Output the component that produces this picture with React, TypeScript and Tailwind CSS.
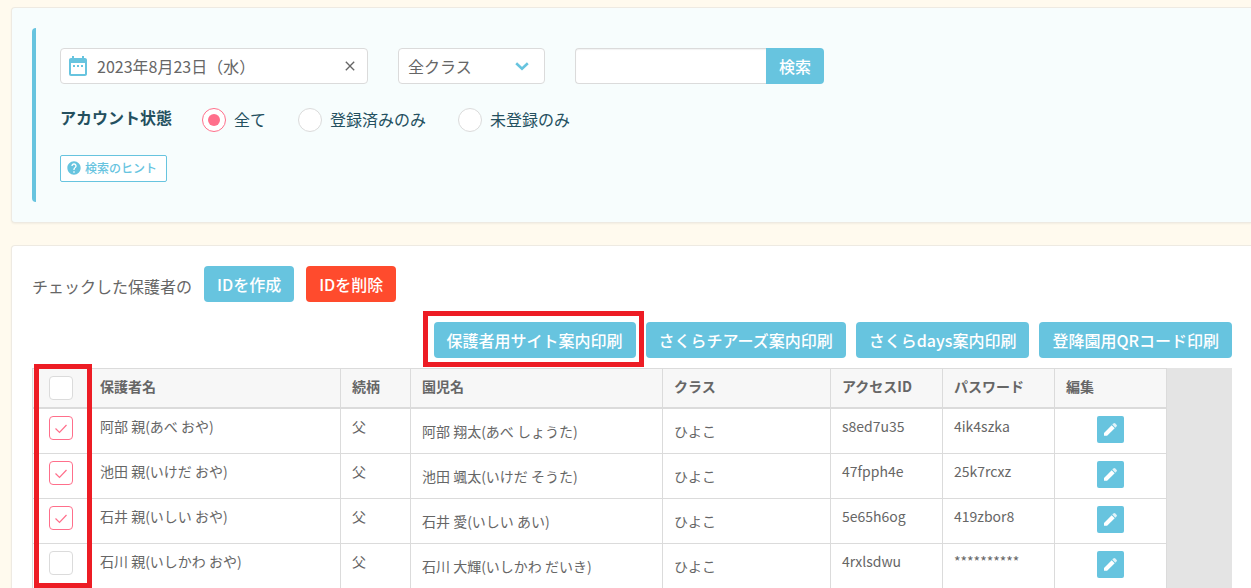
import { useState } from 'react'
import type { ReactNode } from 'react'
import { MdClose, MdDateRange, MdHelp } from 'react-icons/md'

interface Guardian {
  name: string
  relation: string
  child: string
  className: string
  accessId: string
  password: string
}

const GUARDIANS: Guardian[] = [
  { name: '阿部 親(あべ おや)', relation: '父', child: '阿部 翔太(あべ しょうた)', className: 'ひよこ', accessId: 's8ed7u35', password: '4ik4szka' },
  { name: '池田 親(いけだ おや)', relation: '父', child: '池田 颯太(いけだ そうた)', className: 'ひよこ', accessId: '47fpph4e', password: '25k7rcxz' },
  { name: '石井 親(いしい おや)', relation: '父', child: '石井 愛(いしい あい)', className: 'ひよこ', accessId: '5e65h6og', password: '419zbor8' },
  { name: '石川 親(いしかわ おや)', relation: '父', child: '石川 大輝(いしかわ だいき)', className: 'ひよこ', accessId: '4rxlsdwu', password: '**********' },
]

const COLUMNS = [
  { label: '保護者名', width: 'w-[252px]' },
  { label: '続柄', width: 'w-[70px]' },
  { label: '園児名', width: 'w-[252px]' },
  { label: 'クラス', width: 'w-[168px]' },
  { label: 'アクセスID', width: 'w-[112px]' },
  { label: 'パスワード', width: 'w-[112px]' },
  { label: '編集', width: 'w-[112px]' },
]

const STATUSES = ['全て', '登録済みのみ', '未登録のみ']

function Card({ className, children }: { className: string; children: ReactNode }) {
  return (
    <section className={`rounded-l border border-r-0 border-[#eeeae2] py-5 pr-[19px] pl-5 shadow-xs ${className}`}>
      {children}
    </section>
  )
}

function Button({ danger, children }: { danger?: boolean; children: ReactNode }) {
  return (
    <button
      type="button"
      className={`h-9 rounded px-[13px] text-base leading-6 font-medium whitespace-nowrap text-white ${danger ? 'bg-[#ff4b2d]' : 'bg-[#67c4df]'}`}
    >
      {children}
    </button>
  )
}

function CheckBox({ label, checked, onChange }: { label: string; checked: boolean; onChange: () => void }) {
  return (
    <span className="mx-auto grid size-6">
      <input
        type="checkbox"
        aria-label={label}
        checked={checked}
        onChange={onChange}
        className="col-start-1 row-start-1 size-6 appearance-none rounded border border-[#dbdbdb] bg-white checked:border-[#ff6f8b]"
      />
      {checked && (
        <svg
          viewBox="0 0 24 24"
          className="pointer-events-none col-start-1 row-start-1 size-6"
          fill="none"
          stroke="#ff6f8b"
          strokeWidth="1.2"
        >
          <path d="M6.5 12.5l4 4 7-7.500" />
        </svg>
      )}
    </span>
  )
}

function PencilIcon() {
  return (
    <svg viewBox="0 0 13 13" className="size-[13px]" fill="currentColor">
      <path d="M0 12.800V9.900L7.700 2.200l3 3L3.100 12.800z" />
      <path d="M8.300 1.600L9.400.5a1.300 1.300 0 0 1 1.800 0l1.300 1.300a1.300 1.300 0 0 1 0 1.800l-1.200 1.100z" opacity=".8" />
    </svg>
  )
}

function SearchPanel() {
  const [status, setStatus] = useState(STATUSES[0])

  return (
    <Card className="bg-[#f7fdfd]">
      <form className="rounded-l border-l-4 border-[#67c4df] py-5 pl-6" onSubmit={(e) => e.preventDefault()}>
        <div className="flex gap-[30px]">
          <div className="flex h-9 w-[308px] items-center rounded border border-[#dbdbdb] bg-white pl-[5px]">
            <MdDateRange className="size-6 shrink-0 text-[#67c4df]" />
            <input
              type="text"
              aria-label="日付"
              defaultValue="2023年8月23日（水）"
              className="ml-[7px] min-w-0 flex-1 text-base leading-6 outline-none"
            />
            <button type="button" aria-label="クリア" className="mr-[7px] p-0.5">
              <MdClose className="size-4" />
            </button>
          </div>
          <div className="grid w-[147px] items-center">
            <select
              aria-label="クラス"
              className="col-start-1 row-start-1 h-9 appearance-none rounded border border-[#dbdbdb] bg-white pl-[9px] text-base leading-6"
            >
              <option>全クラス</option>
              <option>ひよこ</option>
            </select>
            <svg
              viewBox="0 0 14 9"
              className="pointer-events-none col-start-1 row-start-1 mr-4 h-[9px] w-3.5 justify-self-end"
              fill="none"
              stroke="#67c4df"
              strokeWidth="2.6"
            >
              <path d="M1.2 1.2L7 6.6l5.800-5.400" />
            </svg>
          </div>
          <div className="flex">
            <input
              type="text"
              aria-label="検索キーワード"
              className="h-9 w-[191px] rounded-l border border-r-0 border-[#dbdbdb] bg-white px-2 text-base inset-shadow-xs"
            />
            <button type="submit" className="h-9 rounded-r bg-[#67c4df] px-[13px] text-base leading-6 font-medium text-white">
              検索
            </button>
          </div>
        </div>

        <fieldset className="mt-6 text-[#24505f]">
          <legend className="float-left mr-[30px] text-base leading-[18px] font-bold">アカウント状態</legend>
          <div className="flex gap-8">
            {STATUSES.map((s) => (
              <label key={s} className="flex gap-2 text-base leading-[22px]">
                <input
                  type="radio"
                  name="status"
                  checked={status === s}
                  onChange={() => setStatus(s)}
                  className="grid size-6 appearance-none place-items-center rounded-full border border-[#dbdbdb] bg-white before:size-3 before:rounded-full checked:border-[#ff6f8b] checked:before:bg-[#ff6f8b]"
                />
                {s}
              </label>
            ))}
          </div>
        </fieldset>

        <button
          type="button"
          className="mt-[23px] flex h-[27px] items-center gap-[3px] rounded-xs border border-[#67c4df] bg-white pr-[9px] pl-[5px] pb-px text-xs font-medium text-[#67c4df]"
        >
          <MdHelp className="size-4" />
          検索のヒント
        </button>
      </form>
    </Card>
  )
}

function GuardianTable() {
  const [checked, setChecked] = useState([true, true, true, false])
  const all = checked.every(Boolean)
  const cell = 'border-r border-b border-[#dbdbdb] px-[11px] align-top'

  return (
    <div className="relative mt-2.5 bg-[#e4e4e4]">
      <table className="w-[1135px] table-fixed border-separate border-spacing-0 bg-white text-sm leading-5">
        <thead>
          <tr className="h-[41px] bg-[#f7f7f7] text-left">
            <th className="w-[57px] border border-b-2 border-[#dbdbdb] pt-[7px] align-top">
              <CheckBox label="全て選択" checked={all} onChange={() => setChecked(checked.map(() => !all))} />
            </th>
            {COLUMNS.map((c) => (
              <th key={c.label} className={`border-t border-r border-b-2 border-[#dbdbdb] px-[11px] pt-[7px] align-top font-bold ${c.width}`}>
                {c.label}
              </th>
            ))}
          </tr>
        </thead>
        <tbody>
          {GUARDIANS.map((g, i) => (
            <tr key={g.accessId} className="h-[45px]">
              <td className="border-x border-b border-[#dbdbdb] pt-[7px] align-top">
                <CheckBox
                  label={g.name}
                  checked={checked[i]}
                  onChange={() => setChecked(checked.map((v, j) => (j === i ? !v : v)))}
                />
              </td>
              <td className={`${cell} pt-[7px]`}>{g.name}</td>
              <td className={`${cell} pt-[7px]`}>{g.relation}</td>
              <td className={`${cell} pt-3`}>{g.child}</td>
              <td className={`${cell} pt-3`}>{g.className}</td>
              <td className={`${cell} pt-[7px]`}>{g.accessId}</td>
              <td className={`${cell} pt-[7px]`}>{g.password}</td>
              <td className={`${cell} pt-[7px]`}>
                <button
                  type="button"
                  aria-label="編集"
                  className="mx-auto grid size-[27px] place-items-center rounded-xs bg-[#67c4df] text-white"
                >
                  <PencilIcon />
                </button>
              </td>
            </tr>
          ))}
        </tbody>
      </table>
      {/* highlight around the checkbox column */}
      <div className="pointer-events-none absolute -top-1 left-0.5 h-56 w-[58px] border-5 border-[#ed1c24]" />
    </div>
  )
}

export default function App() {
  return (
    <div className="flex h-screen flex-col gap-[22px] overflow-hidden bg-[#fffaee] pt-[7px] pl-[11px] font-['Noto_Sans_CJK_JP',sans-serif] text-[#666]">
      <SearchPanel />
      <Card className="shrink-0 bg-white">
        <div className="flex items-center gap-3">
          <p className="pt-1 text-base leading-6">チェックした保護者の</p>
          <Button>IDを作成</Button>
          <Button danger>IDを削除</Button>
        </div>
        <div className="mt-5 flex justify-end gap-2.5">
          <div className="relative">
            <Button>保護者用サイト案内印刷</Button>
            {/* highlight around the print button */}
            <div className="pointer-events-none absolute -top-[11px] -right-2 -bottom-[9px] -left-[11px] border-5 border-[#ed1c24]" />
          </div>
          <Button>さくらチアーズ案内印刷</Button>
          <Button>さくらdays案内印刷</Button>
          <Button>登降園用QRコード印刷</Button>
        </div>
        <GuardianTable />
      </Card>
    </div>
  )
}
